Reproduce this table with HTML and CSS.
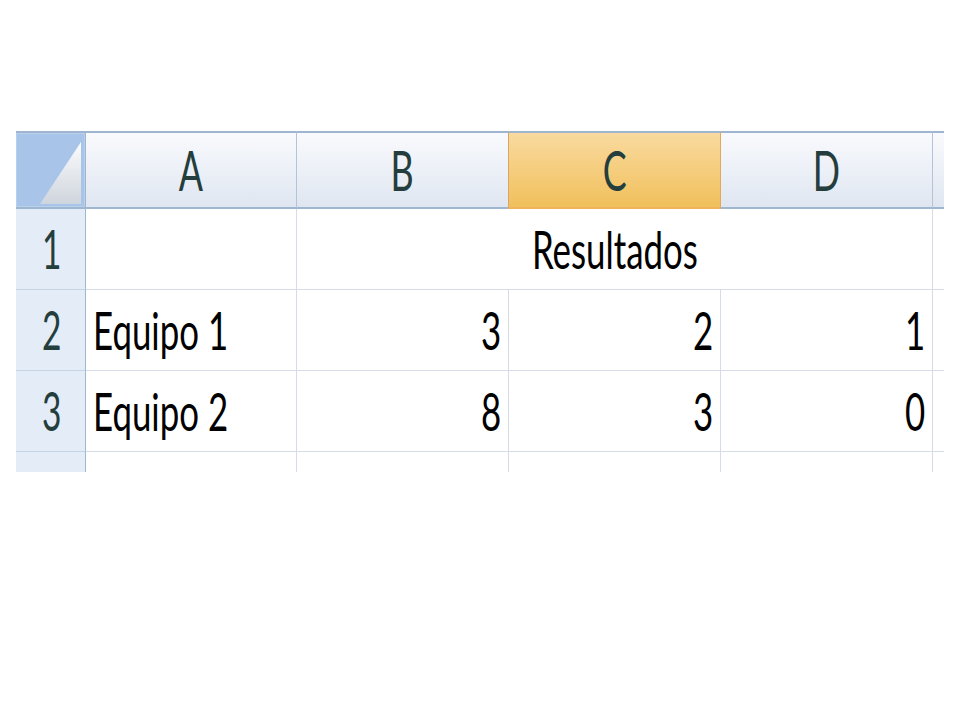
FILE: index.html
```html
<!DOCTYPE html>
<html lang="es">
<head>
<meta charset="utf-8">
<title>Resultados</title>
<link rel="stylesheet" href="styles.css">
</head>
<body>
<div class="sheet">
  <div class="corner">
    <svg width="69" height="74" viewBox="0 0 69 74">
      <defs>
        <linearGradient id="tri" x1="0" y1="0" x2="0" y2="1">
          <stop offset="0" stop-color="#fbfcfd"/>
          <stop offset="1" stop-color="#cfd5dd"/>
        </linearGradient>
      </defs>
      <rect x="0" y="0" width="69" height="74" fill="#a9c4e9"/>
      <rect x="0.5" y="0.5" width="68" height="73" fill="none" stroke="#b9cfee"/>
      <polygon points="24,71 65,9 65,71" fill="url(#tri)"/>
    </svg>
  </div>
  <div class="colhead"><span class="t">A</span></div>
  <div class="colhead"><span class="t">B</span></div>
  <div class="colhead sel"><span class="t">C</span></div>
  <div class="colhead"><span class="t">D</span></div>
  <div class="colhead edge"></div>

  <div class="rowhead"><span class="t">1</span></div>
  <div class="cell"></div>
  <div class="cell merged center"><span class="t">Resultados</span></div>
  <div class="cell edge"></div>

  <div class="rowhead"><span class="t">2</span></div>
  <div class="cell left"><span class="t">Equipo 1</span></div>
  <div class="cell right"><span class="t">3</span></div>
  <div class="cell right"><span class="t">2</span></div>
  <div class="cell right"><span class="t">1</span></div>
  <div class="cell edge"></div>

  <div class="rowhead"><span class="t">3</span></div>
  <div class="cell left"><span class="t">Equipo 2</span></div>
  <div class="cell right"><span class="t">8</span></div>
  <div class="cell right"><span class="t">3</span></div>
  <div class="cell right"><span class="t">0</span></div>
  <div class="cell edge"></div>

  <div class="rowhead last"></div>
  <div class="cell last"></div>
  <div class="cell last"></div>
  <div class="cell last"></div>
  <div class="cell last"></div>
  <div class="cell edge last"></div>
</div>
</body>
</html>
```
FILE: styles.css
```css
* { box-sizing: border-box; }

html, body {
  margin: 0;
  padding: 0;
  background: #ffffff;
}

body {
  font-family: Lato, "Open Sans", "Liberation Sans", sans-serif;
}

.sheet {
  margin: 131px 0 0 16px;
  width: 928px;
  display: grid;
  grid-template-columns: 70px 211px 212px 212px 212px 11px;
  grid-template-rows: 78px 81px 81px 81px 20px;
}

.t {
  display: inline-block;
  transform: scaleX(0.67);
  white-space: nowrap;
}

.corner {
  border-top: 2px solid #9fb4d0;
  border-bottom: 2px solid #9fb6cf;
  border-right: 1px solid #9fb6cf;
  background: #a9c4e9;
  line-height: 0;
}

.corner svg { display: block; }

.colhead {
  border-top: 2px solid #9fb4d0;
  border-bottom: 2px solid #9fb6cf;
  border-right: 1px solid #b4c3d7;
  background: linear-gradient(#f9fafd, #dfe6f1);
  text-align: center;
  font-size: 56px;
  line-height: 74px;
  color: #243d3d;
}

.colhead .t { transform: scaleX(0.64); transform-origin: center; }

.colhead.sel {
  background: linear-gradient(#f9da9f, #f1c05c);
  border-right-color: #e2a95c;
  border-left: 1px solid #d9a466;
  margin-left: -1px;
  border-bottom-color: #f0b35a;
}

.colhead.edge { border-right: none; }

.rowhead {
  background: #e4ecf7;
  border-right: 1px solid #9fb6cf;
  border-bottom: 1px solid #c6d3e3;
  text-align: center;
  font-size: 54px;
  line-height: 80px;
  color: #243d3d;
  padding-left: 2px;
}

.rowhead .t { transform: scaleX(0.62); transform-origin: center; }

.cell {
  background: #ffffff;
  border-right: 1px solid #d5dce8;
  border-bottom: 1px solid #d5dce8;
  font-size: 52px;
  line-height: 80px;
  color: #000000;
}

.cell.merged { grid-column: span 3; }

.cell.center { text-align: center; }
.cell.center .t { transform-origin: center; }

.cell.left { text-align: left; padding-left: 7px; }
.cell.left .t { transform-origin: left center; }

.cell.right { text-align: right; padding-right: 7px; }
.cell.right .t { transform-origin: right center; }

.cell.edge { border-right: none; }

.last { border-bottom: none; }
```
